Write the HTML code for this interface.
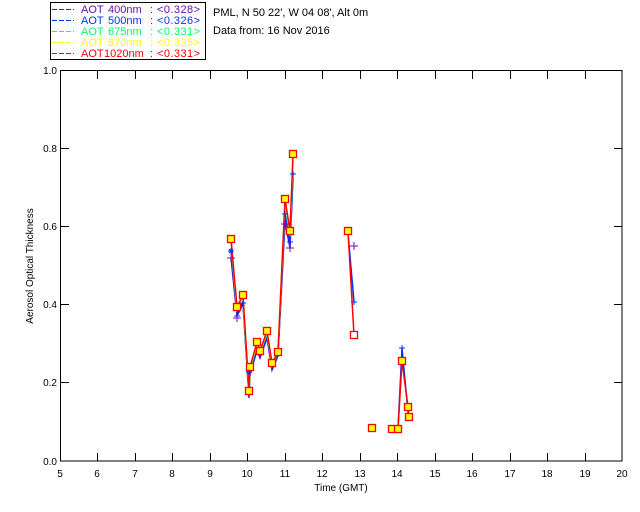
<!DOCTYPE html>
<html><head><style>
body{margin:0;background:#fff;}
svg{display:block;font-family:"Liberation Sans",sans-serif;}
</style></head><body>
<svg width="640" height="512" viewBox="0 0 640 512" xmlns="http://www.w3.org/2000/svg">
<rect width="640" height="512" fill="#fff"/>
<!-- legend -->
<rect x="50.5" y="2.5" width="155" height="57" fill="none" stroke="#000" stroke-width="1"/>
<g font-size="11" stroke-width="1">
<g fill="#6a0dad" stroke="#6a0dad"><path d="M52 9.5h22" stroke-dasharray="5,2"/><text x="81" y="13" stroke="none">AOT</text><text x="108" y="13" stroke="none">400nm</text><text x="150" y="13" stroke="none">:</text><text x="157" y="13" stroke="none" textLength="43">&lt;0.328&gt;</text></g>
<g fill="#0033ff" stroke="#0033ff"><path d="M52 20.5h22" stroke-dasharray="5,2"/><text x="81" y="24" stroke="none">AOT</text><text x="108" y="24" stroke="none">500nm</text><text x="150" y="24" stroke="none">:</text><text x="157" y="24" stroke="none" textLength="43">&lt;0.326&gt;</text></g>
<g fill="#00ff66" stroke="#00ff66"><path d="M52 31.5h22" stroke-dasharray="5,2"/><text x="81" y="35" stroke="none">AOT</text><text x="108" y="35" stroke="none">675nm</text><text x="150" y="35" stroke="none">:</text><text x="157" y="35" stroke="none" textLength="43">&lt;0.331&gt;</text></g>
<g fill="#ffff00" stroke="#ffff00"><path d="M52 42.5h22" stroke-dasharray="5,2"/><text x="81" y="46" stroke="none">AOT</text><text x="108" y="46" stroke="none">870nm</text><text x="150" y="46" stroke="none">:</text><text x="157" y="46" stroke="none" textLength="43">&lt;0.335&gt;</text></g>
<g fill="#ff0000" stroke="#ff0000"><path d="M52 53.5h22" stroke-dasharray="5,2"/><text x="81" y="57" stroke="none">AOT</text><text x="104" y="57" stroke="none">1020nm</text><text x="150" y="57" stroke="none">:</text><text x="157" y="57" stroke="none" textLength="43">&lt;0.331&gt;</text></g>
</g>
<g font-size="11" fill="#000">
<text x="213" y="16">PML, N 50 22', W 04 08', Alt 0m</text>
<text x="213" y="34">Data from: 16 Nov 2016</text>
</g>
<!-- axes -->
<rect x="60.5" y="70.5" width="561.5" height="390.5" fill="none" stroke="#000" stroke-width="1"/>
<g stroke="#000" stroke-width="1">
<path d="M97.5 461v-8M97.5 71v8M135.5 461v-8M135.5 71v8M172.5 461v-8M172.5 71v8M210.5 461v-8M210.5 71v8M247.5 461v-8M247.5 71v8M285.5 461v-8M285.5 71v8M322.5 461v-8M322.5 71v8M360.5 461v-8M360.5 71v8M397.5 461v-8M397.5 71v8M435.5 461v-8M435.5 71v8M472.5 461v-8M472.5 71v8M510.5 461v-8M510.5 71v8M547.5 461v-8M547.5 71v8M585.5 461v-8M585.5 71v8"/>
<path d="M61 382.5h8M622 382.5h-8M61 304.5h8M622 304.5h-8M61 226.5h8M622 226.5h-8M61 148.5h8M622 148.5h-8"/>
</g>
<g font-size="10" fill="#000" text-anchor="middle">
<text x="60" y="477">5</text><text x="97" y="477">6</text><text x="135" y="477">7</text><text x="172" y="477">8</text><text x="210" y="477">9</text><text x="247" y="477">10</text><text x="285" y="477">11</text><text x="322" y="477">12</text><text x="360" y="477">13</text><text x="397" y="477">14</text><text x="435" y="477">15</text><text x="472" y="477">16</text><text x="510" y="477">17</text><text x="547" y="477">18</text><text x="585" y="477">19</text><text x="622" y="477">20</text>
<text x="341" y="491">Time (GMT)</text>
</g>
<g font-size="10" fill="#000" text-anchor="end">
<text x="57" y="465">0.0</text><text x="57" y="386">0.2</text><text x="57" y="308">0.4</text><text x="57" y="230">0.6</text><text x="57" y="152">0.8</text><text x="57" y="74">1.0</text>
</g>
<text transform="translate(33,266) rotate(-90)" font-size="10" text-anchor="middle" fill="#000">Aerosol Optical Thickness</text>
<!-- data lines -->
<g fill="none" stroke-width="1.5">
<polyline stroke="#6a0dad" points="231,258 237,316 243,304 249,398 250,375 257,350 260,358 267,338 272,370 278,356 285,222 290,248 293,178"/>
<polyline stroke="#0033ff" points="231,250 237,314 243,302 249,395 250,372 257,348 260,356 267,336 272,368 278,352 285,214 290,244 293,172"/>
<polyline stroke="#00ff66" points="231,242 237,310 243,298 249,393 250,369 257,345 260,353 267,333 272,365 278,352 285,202 290,236 293,160"/>
<polyline stroke="#ffff00" points="231,240 237,309 243,297 249,392 250,368 257,343 260,352 267,332 272,364 278,352 285,200 290,233 293,156"/>
<polyline stroke="#ff0000" points="231,239 237,307 243,295 249,391 250,367 257,342 260,351 267,331 272,363 278,352 285,199 290,231 293,154"/>
<polyline stroke="#0033ff" points="348,233 354,302"/>
<polyline stroke="#ff0000" points="348,231 354,335"/>
<polyline stroke="#0033ff" points="392,429 398,429 402,348 408,412 409,420"/>
<polyline stroke="#ff0000" points="392,429 398,429 402,361 408,407 409,417"/>
</g>
<!-- symbols -->
<g fill="none" stroke="#0033ff" stroke-width="1">
<path d="M228 251h6M231 248v6M229 249l4 4M233 249l-4 4M234 316h6M237 313v6M240 303h6M243 300v6M282 214h6M285 211v6M287 242h6M290 239v6M290 174h6M293 171v6M351 302h6M354 299v6M399 348h6M402 345v6M246 372h6M249 369v6M257 350h6M260 347v6"/>
</g>
<g fill="none" stroke="#6a0dad" stroke-width="1">
<path d="M227 258h8M231 254v8M233 318h8M237 314v8M281 224h8M285 220v8M286 248h8M290 244v8M350 246h8M354 242v8"/>
</g>
<g fill="#ffff00" stroke="#ff0000" stroke-width="1.3">
<rect x="227.5" y="235.5" width="7" height="7"/><rect x="233.5" y="303.5" width="7" height="7"/><rect x="239.5" y="291.5" width="7" height="7"/><rect x="245.5" y="387.5" width="7" height="7"/><rect x="246.5" y="363.5" width="7" height="7"/><rect x="253.5" y="338.5" width="7" height="7"/><rect x="256.5" y="347.5" width="7" height="7"/><rect x="263.5" y="327.5" width="7" height="7"/><rect x="268.5" y="359.5" width="7" height="7"/><rect x="274.5" y="348.5" width="7" height="7"/><rect x="281.5" y="195.5" width="7" height="7"/><rect x="286.5" y="227.5" width="7" height="7"/><rect x="289.5" y="150.5" width="7" height="7"/><rect x="344.5" y="227.5" width="7" height="7"/><rect x="350.5" y="331.5" width="7" height="7" fill="#fff"/><rect x="368.5" y="424.5" width="7" height="7"/><rect x="388.5" y="425.5" width="7" height="7"/><rect x="394.5" y="425.5" width="7" height="7"/><rect x="398.5" y="357.5" width="7" height="7"/><rect x="404.5" y="403.5" width="7" height="7"/><rect x="405.5" y="413.5" width="7" height="7"/>
</g>
</svg>
</body></html>
